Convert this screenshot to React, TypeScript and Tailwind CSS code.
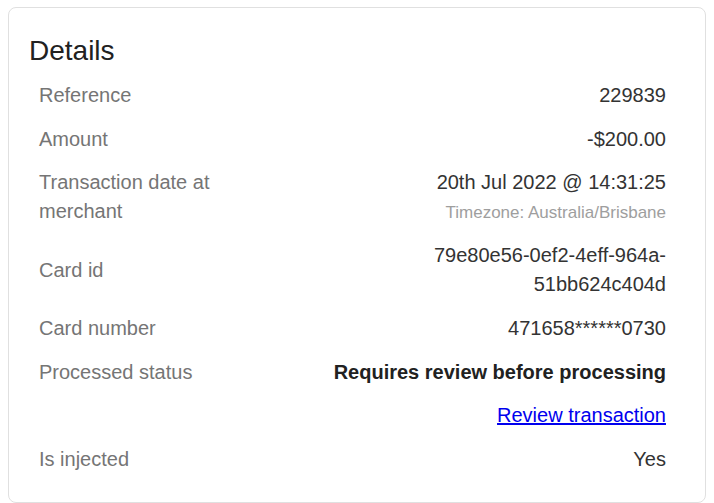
import React from 'react';

type Row = {
    label?: string;
    value: React.ReactNode;
};

const rows: Row[] = [
    { label: 'Reference', value: '229839' },
    { label: 'Amount', value: '-$200.00' },
    {
        label: 'Transaction date at merchant',
        value: (
            <>
                <div>20th Jul 2022 @ 14:31:25</div>
                <div className="text-[17px] leading-[29px] text-[#9e9e9e]">Timezone: Australia/Brisbane</div>
            </>
        ),
    },
    { label: 'Card id', value: '79e80e56-0ef2-4eff-964a-51bb624c404d' },
    { label: 'Card number', value: '471658******0730' },
    {
        label: 'Processed status',
        value: <span className="font-bold text-[#212121]">Requires review before processing</span>,
    },
    {
        value: (
            <a href="#" className="text-[#0000ee] underline">
                Review transaction
            </a>
        ),
    },
    { label: 'Is injected', value: 'Yes' },
];

const App = () => {
    return (
        <div className="min-h-screen bg-white pt-[7px] px-2 font-['Liberation_Sans',Arial,sans-serif]">
            <div className="rounded-lg border border-[#e0e0e0] px-5 pt-[26px] pb-5">
                {/* Title */}
                <h2 className="mb-[6px] text-[28px] leading-[1.2] text-[#212121]">Details</h2>

                {/* Detail rows */}
                <div className="flex flex-col">
                    {rows.map((row, i) => (
                        <div key={i} className="flex items-center py-[7.25px] pl-[10px] pr-[19px] text-[20px] leading-[29.2px]">
                            <div className="w-[220px] shrink-0 text-[#757575]">{row.label}</div>
                            <div className="ml-auto w-[340px] break-words text-right text-[#333333]">{row.value}</div>
                        </div>
                    ))}
                </div>
            </div>
        </div>
    );
};

export default App;
